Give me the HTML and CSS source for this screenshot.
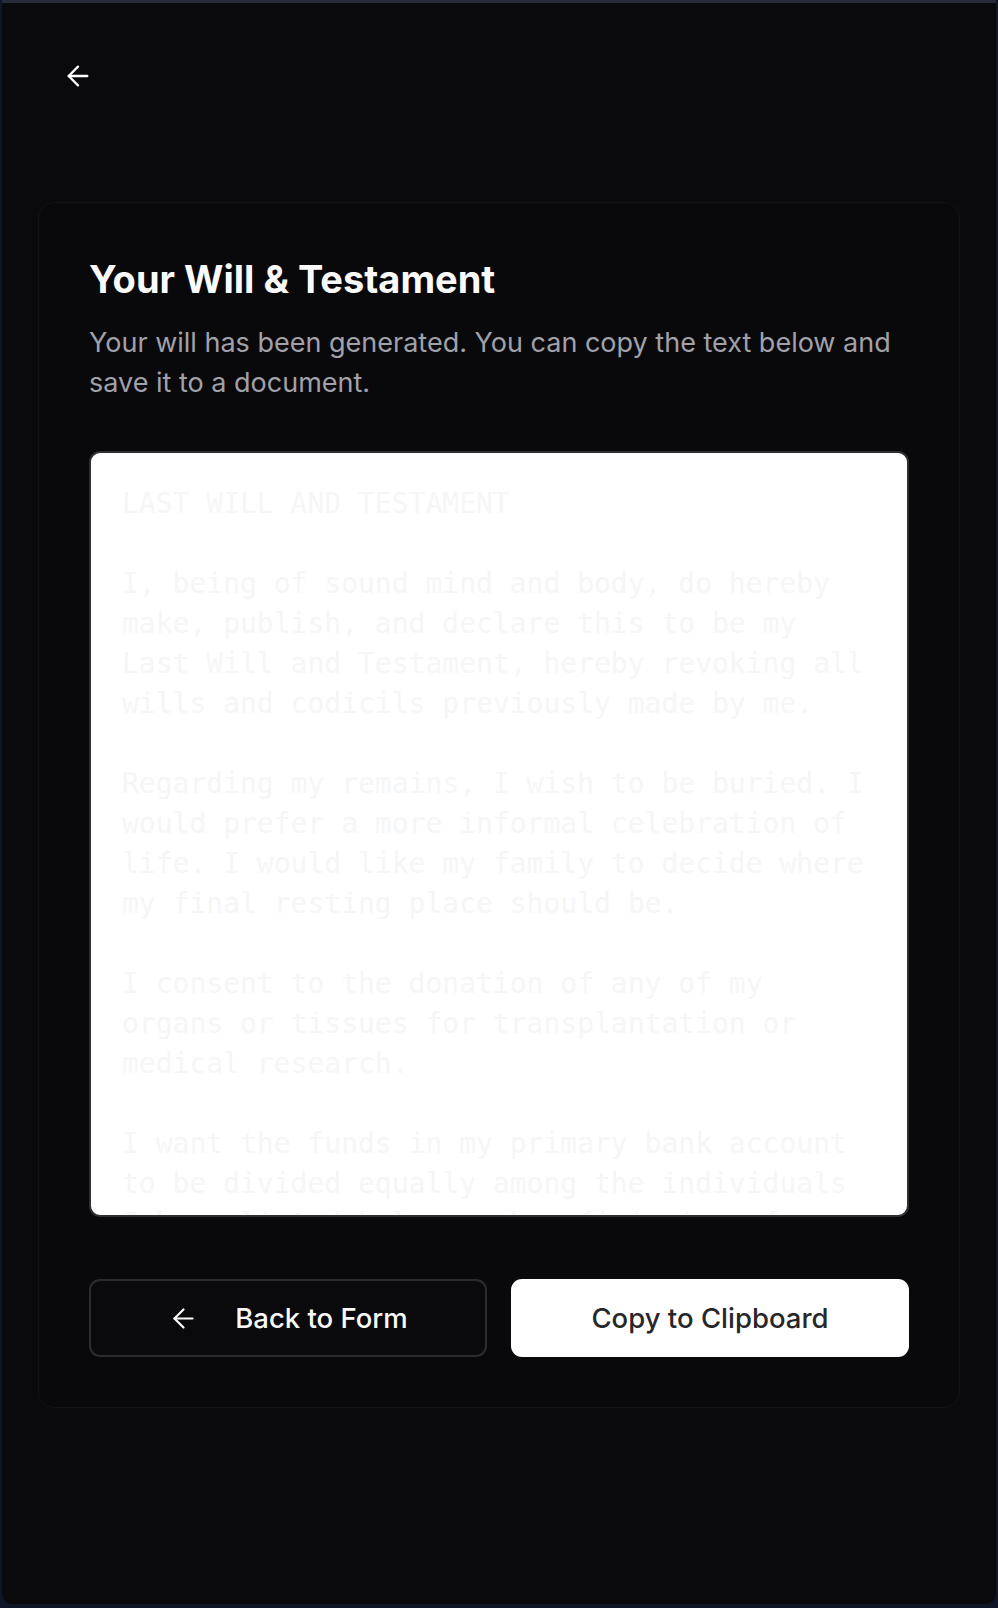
FILE: index.html
```html
<!DOCTYPE html>
<html lang="en">
<head>
<meta charset="utf-8">
<title>Your Will &amp; Testament</title>
<link rel="stylesheet" href="styles.css">
</head>
<body>
<div class="app">
  <header class="topbar">
    <button class="icon-btn" aria-label="Back">
      <svg width="32" height="32" viewBox="0 0 24 24" fill="none" stroke="currentColor" stroke-width="1.7" stroke-linecap="round" stroke-linejoin="round"><path d="m12 19-7-7 7-7"/><path d="M19 12H5"/></svg>
    </button>
  </header>
  <main class="card">
    <h1 class="title">Your Will &amp; Testament</h1>
    <p class="subtitle">Your will has been generated. You can copy the text below and save it to a document.</p>
    <textarea class="will-text" readonly>LAST WILL AND TESTAMENT

I, being of sound mind and body, do hereby make, publish, and declare this to be my Last Will and Testament, hereby revoking all wills and codicils previously made by me.

Regarding my remains, I wish to be buried. I would prefer a more informal celebration of life. I would like my family to decide where my final resting place should be.

I consent to the donation of any of my organs or tissues for transplantation or medical research.

I want the funds in my primary bank account to be divided equally among the individuals I have listed below as beneficiaries of my estate.</textarea>
    <div class="actions">
      <button class="btn btn-outline">
        <svg width="31" height="31" viewBox="0 0 24 24" fill="none" stroke="currentColor" stroke-width="1.7" stroke-linecap="round" stroke-linejoin="round"><path d="m12 19-7-7 7-7"/><path d="M19 12H5"/></svg>
        <span>Back to Form</span>
      </button>
      <button class="btn btn-solid">Copy to Clipboard</button>
    </div>
  </main>
</div>
</body>
</html>
```
FILE: styles.css
```css
* { box-sizing: border-box; }
html, body { margin: 0; padding: 0; }
body {
  background: #0f1628;
  font-family: Inter, "Noto Sans", "Liberation Sans", sans-serif;
  height: 1608px;
  padding: 0 2px 4px 2px;
}
.app {
  height: 1604px;
  background: #0a0a0c;
  border-top: 3px solid #272c3b;
  border-radius: 0 0 10px 10px;
  padding: 57px 36px 0 36px;
}
.topbar {
  display: flex;
  padding-left: 24px;
}
.icon-btn {
  background: none;
  border: 0;
  padding: 0;
  color: #ffffff;
  width: 32px;
  height: 32px;
  display: flex;
}
.card {
  margin-top: 110px;
  border: 1px solid #131317;
  border-radius: 16px;
  background: #09090b;
  padding: 52px 50px 50px 50px;
}
.title {
  margin: 0;
  color: #fafafa;
  font-size: 38px;
  line-height: 48px;
  font-weight: 700;
  letter-spacing: 0;
}
.subtitle {
  margin: 20px 0 0 0;
  color: #a1a1aa;
  font-size: 27px;
  line-height: 40px;
  font-weight: 400;
}
.will-text {
  display: block;
  margin-top: 48px;
  width: 100%;
  height: 766px;
  background: #ffffff;
  border: 2px solid #2e2e33;
  border-radius: 11px;
  padding: 31px;
  font-family: "DejaVu Sans Mono", "Liberation Mono", monospace;
  font-size: 28px;
  line-height: 40px;
  color: #f6f6f7;
  resize: none;
  overflow: hidden;
  outline: none;
}
.actions {
  margin-top: 62px;
  display: grid;
  grid-template-columns: 1fr 1fr;
  gap: 24px;
}
.btn {
  height: 78px;
  border-radius: 11px;
  font-family: Inter, "Noto Sans", "Liberation Sans", sans-serif;
  font-size: 27.5px;
  font-weight: 500;
  display: flex;
  align-items: center;
  justify-content: center;
  gap: 36px;
  cursor: pointer;
}
.btn-outline {
  background: #0a0a0c;
  color: #fafafa;
  border: 2px solid #2b2b30;
}
.btn-solid {
  background: #ffffff;
  color: #27272a;
  border: 0;
}
```
